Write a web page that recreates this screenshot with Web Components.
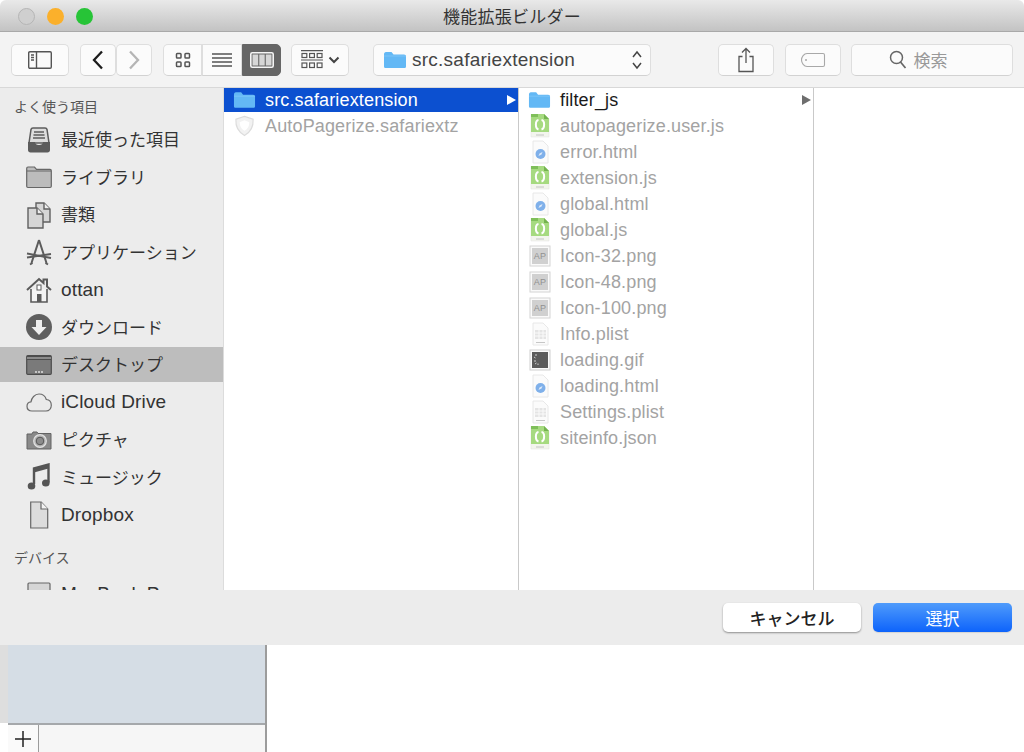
<!DOCTYPE html>
<html lang="ja">
<head>
<meta charset="utf-8">
<title>機能拡張ビルダー</title>
<style>
  html, body { margin: 0; height: 100%; background: #fff; overflow: hidden; }
  body { font-family: "Liberation Sans", "Noto Sans CJK JP", sans-serif; }
</style>
</head>
<body>
<file-dialog></file-dialog>

<script>
// all icons live here, drawn by hand against the screenshot
const folder = '<svg viewBox="0 0 24 18" width="24" height="18"><path d="M1 3.500C1 2 1.700 1 3 1h5.500l2 2.400H21c1.300 0 2 .8 2 2V15.500c0 1-.7 1.600-1.800 1.600H2.800C1.700 17.100 1 16.500 1 15.500z" fill="#63b8f5"/><path d="M1 4.500h22v1H1z" fill="#7cc4f7"/></svg>';
const jsDoc = '<svg viewBox="0 0 22 24" width="22" height="24"><path d="M2 0h13l5 5v18H2z" fill="#f3f5ee" stroke="#e2e2e2" stroke-width=".5"/><path d="M2 0h13l5 5v13H2z" fill="#a6da80"/><path d="M15 0l5 5h-5z" fill="#74b350"/><path d="M2 0h7v3H2z" fill="#7fbf5a"/><path d="M9.500 6c-3.500.5-3.500 8.500 0 9.500M12.500 6c3.500.5 3.500 8.500 0 9.500" fill="none" stroke="#fff" stroke-width="2"/><path d="M7 21h8" stroke="#c4c4c4"/></svg>';
const htmlDoc = '<svg viewBox="0 0 22 24" width="22" height="24"><path d="M4 1h10l5 5v17H4z" fill="#fbfbfb" stroke="#e8e8e8"/><circle cx="11.500" cy="14" r="5" fill="#7fb0ea"/><path d="M13.500 12l-3 1.500-1 2.500 3-1.500z" fill="#dfeaf8"/></svg>';
const pngDoc = '<svg viewBox="0 0 22 24" width="22" height="24"><rect x="1" y="2" width="20" height="20" fill="#fafafa" stroke="#d4d4d4"/><rect x="3" y="4" width="16" height="16" fill="#d0d0d0"/><text x="11" y="15" font-family="Liberation Sans" font-size="9" text-anchor="middle" fill="#909090">AP</text></svg>';
const plistDoc = '<svg viewBox="0 0 22 24" width="22" height="24"><path d="M4 1h10l5 5v17H4z" fill="#fbfbfb" stroke="#e8e8e8"/><path d="M6 8h11v9H6z" fill="#e4e4e4"/><path d="M6 11h11M6 14h11M10 8v9M14 8v9" stroke="#fafafa"/><path d="M7 20.500h9" stroke="#c6c6c6"/></svg>';
const gifDoc = '<svg viewBox="0 0 22 24" width="22" height="24"><rect x="1" y="2" width="20" height="20" fill="#fafafa" stroke="#cfcfcf"/><rect x="3" y="4" width="16" height="16" fill="#5b5b5b"/><path d="M7 6v2M5 9l1.500 1M5 13h2M6 16l1.500-1M9 17v-1.500" stroke="#ccc"/></svg>';
const shield = '<svg viewBox="0 0 24 24" width="24" height="24"><path d="M12 2l9 3c.5 8-2 13-9 17C5 18 2.500 13 3 5z" fill="#f2f2f2" stroke="#dcdcdc" stroke-width="1.200"/><path d="M12 6l5 2c0 4-1.500 7-5 9-3.500-2-5-5-5-9z" fill="#fff"/></svg>';

const ICONS = {
  folder, js: jsDoc, html: htmlDoc, png: pngDoc, plist: plistDoc, gif: gifDoc, shield,
  recent: '<svg viewBox="0 0 26 28" width="26" height="28"><path d="M3 17L5 3.500C5.200 2.500 6 2 7 2h12c1 0 1.800.5 2 1.500L23 17z" fill="#ddd" stroke="#5c5c5c" stroke-width="1.500"/><path d="M8 6h10M7.500 9h11M7 12h12" stroke="#5c5c5c" stroke-width="1.300"/><path d="M2 16h7c0 2 1.500 3 4 3s4-1 4-3h7v8c0 1.500-1 2.500-2.500 2.500h-17C3 26.500 2 25.500 2 24z" fill="#5c5c5c"/></svg>',
  library: '<svg viewBox="0 0 26 28" width="26" height="28"><path d="M.7 5.500C.7 4.500 1.200 4 2 4h6.500l2 2.400H24c.8 0 1.300.5 1.300 1.300v15.600c0 .8-.5 1.200-1.300 1.200H2c-.8 0-1.300-.4-1.300-1.200z" fill="#bcbcbc" stroke="#666" stroke-width="1.200"/><path d="M1 8h24" stroke="#666"/></svg>',
  docs: '<svg viewBox="0 0 26 28" width="26" height="28"><path d="M10 2h8l6 6v13H10z" fill="#d6d6d6" stroke="#606060" stroke-width="1.400"/><path d="M18 2v6h6" fill="#eee" stroke="#606060" stroke-width="1.400"/><path d="M2 7h9l6 6v14H2z" fill="#d6d6d6" stroke="#606060" stroke-width="1.400"/><path d="M11 7v6h6" fill="#eee" stroke="#606060" stroke-width="1.400"/></svg>',
  apps: '<svg viewBox="0 0 26 28" width="26" height="28"><path d="M13 2L5.500 25M13 2l7.500 23" fill="none" stroke="#5c5c5c" stroke-width="2"/><path d="M1 19.500L25 16M1 15.500l24 4.500" fill="none" stroke="#5c5c5c" stroke-width="1.800"/><path d="M4 26.500l2.500-1.500M22 26.500L19.500 25" stroke="#5c5c5c" stroke-width="2"/></svg>',
  home: '<svg viewBox="0 0 26 28" width="26" height="28"><path d="M1 14L13 3l4.500 4V3.500h3.500V10.500l4 3.500" fill="none" stroke="#5a5a5a" stroke-width="2"/><path d="M5 13v13h16V13" fill="#f3f3f3" stroke="#5a5a5a" stroke-width="1.600"/><rect x="11" y="9" width="4" height="5" fill="#fff" stroke="#5a5a5a"/><rect x="11" y="18" width="4.500" height="8" fill="#5a5a5a"/></svg>',
  download: '<svg viewBox="0 0 26 28" width="26" height="28"><circle cx="13" cy="14" r="13" fill="#5f5f5f"/><path d="M10 7h6v7h4.500L13 22l-7.500-8H10z" fill="#eee"/></svg>',
  desktop: '<svg viewBox="0 0 26 28" width="26" height="28"><rect x=".7" y="4.700" width="24.600" height="18.600" rx="1" fill="#7a7a7a" stroke="#4d4d4d" stroke-width="1.200"/><path d="M1 5h24v4H1z" fill="#4d4d4d"/><path d="M1 7h24" stroke="#ccc"/><path d="M9 20h2v2H9zM12 20h2v2h-2zM15 20h2v2h-2z" fill="#c5c5c5"/></svg>',
  cloud: '<svg viewBox="0 0 26 28" width="26" height="28"><path d="M6 23c-3 0-5-2-5-4.800C1 15.800 2.800 14 5 13.800 5.500 10 8.700 6 13 6c3.700 0 6.300 2.300 7.300 5.500 3 .3 5 2.700 5 5.800 0 3.200-2.200 5.700-5.300 5.700z" fill="#eaeaea" stroke="#6b6b6b" stroke-width="1.200"/></svg>',
  camera: '<svg viewBox="0 0 26 28" width="26" height="28"><path d="M1 8h5l1-2h4l1 1.500h13V23H1z" fill="#8a8a8a" stroke="#636363"/><circle cx="14" cy="15" r="6.300" fill="#b5b5b5" stroke="#e2e2e2" stroke-width="1.200"/><circle cx="14" cy="15" r="3.800" fill="#8c8c8c" stroke="#575757"/></svg>',
  music: '<svg viewBox="0 0 26 28" width="26" height="28"><path d="M8 21V5.500L22.500 1.500v18" fill="none" stroke="#555" stroke-width="2.400"/><path d="M8 5.500L22.500 1.500v4L8 9.500z" fill="#555"/><ellipse cx="5.500" cy="23" rx="3.800" ry="3.600" fill="#555"/><ellipse cx="19.800" cy="20" rx="3.800" ry="3.600" fill="#555"/></svg>',
  page: '<svg viewBox="0 0 26 28" width="26" height="28"><path d="M4.700 1h10.500l6.500 7v19h-17z" fill="#dcdcdc" stroke="#666" stroke-width="1.200"/><path d="M15 1v7h7" fill="#f2f2f2" stroke="#666" stroke-width="1.200"/></svg>',
  laptop: '<svg viewBox="0 0 26 28" width="26" height="28"><rect x="2" y="3" width="22" height="19" rx="1" fill="#d6d6d6" stroke="#666" stroke-width="1.200"/></svg>',
  sidebar: '<svg viewBox="0 0 24 18" width="24" height="18"><rect x=".7" y=".7" width="22.600" height="16.600" rx="1.200" fill="#fafafa" stroke="#555" stroke-width="1.400"/><path d="M8.500 1v16" stroke="#555" stroke-width="1.400"/><path d="M3 4h3M3 6.500h3M3 9h3" stroke="#555" stroke-width="1.300"/></svg>',
  back: '<svg viewBox="0 0 14 20" width="14" height="20"><path d="M11 1.500L3 10l8 8.500" fill="none" stroke="#1c1c1c" stroke-width="2.300"/></svg>',
  forward: '<svg viewBox="0 0 14 20" width="14" height="20"><path d="M3 1.500L11 10l-8 8.500" fill="none" stroke="#b5b5b5" stroke-width="2.300"/></svg>',
  grid: '<svg viewBox="0 0 16 16" width="16" height="16"><g fill="none" stroke="#555" stroke-width="1.500"><rect x="1.500" y="1.500" width="4.500" height="4.500" rx=".8"/><rect x="10" y="1.500" width="4.500" height="4.500" rx=".8"/><rect x="1.500" y="10" width="4.500" height="4.500" rx=".8"/><rect x="10" y="10" width="4.500" height="4.500" rx=".8"/></g></svg>',
  list: '<svg viewBox="0 0 22 16" width="22" height="16"><path d="M1 2h20M1 6h20M1 10h20M1 14h20" stroke="#555" stroke-width="1.300"/></svg>',
  columns: '<svg viewBox="0 0 24 16" width="24" height="16"><rect x=".8" y=".8" width="22.400" height="14.400" rx="1.500" fill="#666" stroke="#f5f5f5" stroke-width="1.600"/><path d="M2.500 2.500h5.700v11H2.500zM9.300 2.500h5.400v11H9.300zM15.800 2.500h5.700v11h-5.700z" fill="#d6d6d6"/></svg>',
  arrange: '<svg viewBox="0 0 22 20" width="22" height="20"><path d="M0 .7h22M0 10h22" stroke="#555" stroke-width="1.200"/><g fill="none" stroke="#555" stroke-width="1.200"><rect x="1" y="3.500" width="4.800" height="4"/><rect x="8.600" y="3.500" width="4.800" height="4"/><rect x="16.200" y="3.500" width="4.800" height="4"/><rect x="1" y="13" width="4.800" height="4.500"/><rect x="8.600" y="13" width="4.800" height="4.500"/><rect x="16.200" y="13" width="4.800" height="4.500"/></g></svg>',
  caret: '<svg viewBox="0 0 12 8" width="12" height="8"><path d="M1.500 1.500L6 6l4.500-4.500" fill="none" stroke="#444" stroke-width="2"/></svg>',
  updown: '<svg viewBox="0 0 12 22" width="12" height="22"><path d="M2 8l4-5 4 5M2 14l4 5 4-5" fill="none" stroke="#444" stroke-width="1.500"/></svg>',
  share: '<svg viewBox="0 0 18 26" width="18" height="26"><path d="M5.500 9.500H2v15h14v-15h-3.500" fill="none" stroke="#555" stroke-width="1.300"/><path d="M9 16V2M5 5.500L9 1.500l4 4" fill="none" stroke="#555" stroke-width="1.300"/></svg>',
  tag: '<svg viewBox="0 0 26 16" width="26" height="16"><path d="M7 1.500h16c1 0 1.500.5 1.500 1.500v10c0 1-.5 1.500-1.500 1.500H7C4 14.500 1.500 11 1.500 8S4 1.500 7 1.500z" fill="none" stroke="#a8a8a8" stroke-width="1.100"/><circle cx="6" cy="8" r="1" fill="#a8a8a8"/></svg>',
  search: '<svg viewBox="0 0 18 19" width="18" height="19"><circle cx="7.500" cy="7.500" r="6" fill="none" stroke="#666" stroke-width="1.500"/><path d="M11.500 12l5 6" stroke="#666" stroke-width="1.700"/></svg>',
  plus: '<svg viewBox="0 0 18 18" width="18" height="18"><path d="M9 1v16M1 9h16" stroke="#222" stroke-width="1.500"/></svg>'
};

class SfIcon extends HTMLElement {
  static get observedAttributes() { return ['name']; }
  constructor() {
    super();
    this.attachShadow({ mode: 'open' });
  }
  attributeChangedCallback() {
    this.shadowRoot.innerHTML = `<style>:host{display:inline-flex;align-items:center;justify-content:center;flex:none}svg{display:block}</style>${ICONS[this.getAttribute('name')] || ''}`;
  }
}
customElements.define('sf-icon', SfIcon);

class TitleBar extends HTMLElement {
  constructor() {
    super();
    this.attachShadow({ mode: 'open' }).innerHTML = `
      <style>
        :host { display: grid; grid-template-columns: 1fr auto 1fr; align-items: center; height: 32px; box-sizing: border-box;
          background: linear-gradient(#e9e9e9, #c3c3c3); border-bottom: 1px solid #a9a9a9; border-radius: 6px 6px 0 0; }
        .lights { display: flex; gap: 12px; margin-left: 18px; }
        .lights span { width: 17px; height: 17px; border-radius: 50%; box-sizing: border-box; }
        .close { background: #cfcfcf; border: 1px solid #b5b5b5; }
        .min { background: #fbb02b; }
        .max { background: #27c437; }
        .name { font: 17px/32px "Noto Sans CJK JP", sans-serif; letter-spacing: .25px; color: #333; }
      </style>
      <div class="lights"><span class="close"></span><span class="min"></span><span class="max"></span></div>
      <div class="name"><slot></slot></div>
      <div></div>`;
  }
}
customElements.define('title-bar', TitleBar);

class ToolButton extends HTMLElement {
  constructor() {
    super();
    this.attachShadow({ mode: 'open' }).innerHTML = `
      <style>
        :host { display: flex; align-items: center; justify-content: center; gap: 5px; box-sizing: border-box; height: 32px;
          background: #fbfbfb; border: 1px solid #dedede; border-bottom-color: #d2d2d2; border-radius: 5px; flex: none; }
        :host([active]) { background: #666; border-color: #666; }
      </style>
      <slot></slot>`;
  }
}
customElements.define('tool-button', ToolButton);

class ToolBar extends HTMLElement {
  constructor() {
    super();
    this.attachShadow({ mode: 'open' }).innerHTML = `
      <style>
        :host { display: flex; align-items: center; height: 56px; box-sizing: border-box; padding: 1px 11px 0 11px; background: #f3f3f3; border-bottom: 1px solid #d8d8d8; }
        .seg { display: flex; flex: none; }
        tool-button { width: var(--w); margin-left: var(--m, 0); }
        .path { justify-content: flex-start; padding: 0 7px 0 9px; gap: 5px; font: 19px "Liberation Sans", sans-serif; letter-spacing: .25px; color: #444; }
        .path span { flex: 1; }
        .find { font: 17px "Noto Sans CJK JP", sans-serif; color: #999; gap: 7px; padding: 0 28px 2px 0; }
        .l { border-radius: 5px 0 0 5px; } .r { border-radius: 0 5px 5px 0; } .c { border-radius: 0; }
      </style>
      <tool-button style="--w:58px"><sf-icon name="sidebar"></sf-icon></tool-button>
      <div class="seg" style="margin-left:11px">
        <tool-button style="--w:36px"><sf-icon name="back"></sf-icon></tool-button>
        <tool-button style="--w:36px"><sf-icon name="forward"></sf-icon></tool-button>
      </div>
      <div class="seg" style="margin-left:11px">
        <tool-button class="l" style="--w:39px"><sf-icon name="grid"></sf-icon></tool-button>
        <tool-button class="c" style="--w:40px"><sf-icon name="list"></sf-icon></tool-button>
        <tool-button class="r" active style="--w:39px"><sf-icon name="columns"></sf-icon></tool-button>
      </div>
      <tool-button style="--w:58px;--m:10px"><sf-icon name="arrange"></sf-icon><sf-icon name="caret"></sf-icon></tool-button>
      <tool-button class="path" style="--w:278px;--m:24px"><sf-icon name="folder"></sf-icon><span>src.safariextension</span><sf-icon name="updown"></sf-icon></tool-button>
      <tool-button style="--w:56px;--m:67px"><sf-icon name="share"></sf-icon></tool-button>
      <tool-button style="--w:56px;--m:11px"><sf-icon name="tag"></sf-icon></tool-button>
      <tool-button class="find" style="--w:162px;--m:10px"><sf-icon name="search"></sf-icon><span>検索</span></tool-button>`;
  }
}
customElements.define('tool-bar', ToolBar);

class SideItem extends HTMLElement {
  constructor() {
    super();
    this.attachShadow({ mode: 'open' }).innerHTML = `
      <style>
        :host { display: flex; align-items: center; gap: 9px; height: 35px; margin-bottom: 2.5px; padding-left: 26px; color: #333;
          font: 17px "Noto Sans CJK JP", sans-serif; white-space: nowrap; }
        :host([latin]) { font: 19px "Liberation Sans", sans-serif; letter-spacing: .15px; }
        :host([selected]) { background: #bdbdbd; }
        span { padding-bottom: 2px; }
        :host([latin]) span { padding-bottom: 0; }
      </style>
      <sf-icon></sf-icon><span><slot></slot></span>`;
  }
  connectedCallback() {
    this.shadowRoot.querySelector('sf-icon').setAttribute('name', this.getAttribute('icon'));
  }
}
customElements.define('side-item', SideItem);

class SideBar extends HTMLElement {
  constructor() {
    super();
    this.attachShadow({ mode: 'open' }).innerHTML = `
      <style>
        :host { display: block; width: 224px; flex: none; box-sizing: border-box; background: #ececec; border-right: 1px solid #dcdcdc; padding-top: 7px; overflow: hidden; }
        h2 { margin: 0; padding-left: 14px; font: 400 14px/22px "Noto Sans CJK JP", sans-serif; color: #555; }
        .items { margin: 5px 0 13.500px; }
        .devices { margin-top: 9px; }
      </style>
      <h2>よく使う項目</h2>
      <div class="items">
        <side-item icon="recent">最近使った項目</side-item>
        <side-item icon="library">ライブラリ</side-item>
        <side-item icon="docs">書類</side-item>
        <side-item icon="apps">アプリケーション</side-item>
        <side-item icon="home" latin>ottan</side-item>
        <side-item icon="download">ダウンロード</side-item>
        <side-item icon="desktop" selected>デスクトップ</side-item>
        <side-item icon="cloud" latin>iCloud Drive</side-item>
        <side-item icon="camera">ピクチャ</side-item>
        <side-item icon="music">ミュージック</side-item>
        <side-item icon="page" latin>Dropbox</side-item>
      </div>
      <h2>デバイス</h2>
      <div class="devices"><side-item icon="laptop" latin>MacBook Pro</side-item></div>`;
  }
}
customElements.define('side-bar', SideBar);

class FileRow extends HTMLElement {
  constructor() {
    super();
    this.attachShadow({ mode: 'open' }).innerHTML = `
      <style>
        :host { display: flex; align-items: center; gap: 9px; height: 24px; margin-bottom: 2px; padding: 0 2px 0 9px; color: #a3a3a3;
          font: 18px "Liberation Sans", sans-serif; letter-spacing: .15px; white-space: nowrap; }
        :host([enabled]) { color: #1a1a1a; }
        :host([selected]) { background: #0c50d0; color: #fff; }
        sf-icon { width: 23px; }
        span { flex: 1; }
        i { width: 0; height: 0; border: 5.500px solid transparent; border-left: 9px solid #6e6e6e; border-right: 0; }
        :host([selected]) i { border-left-color: #fff; }
      </style>
      <sf-icon></sf-icon><span><slot></slot></span><i hidden></i>`;
  }
  connectedCallback() {
    const root = this.shadowRoot;
    root.querySelector('sf-icon').setAttribute('name', this.getAttribute('icon'));
    if (this.hasAttribute('arrow')) root.querySelector('i').hidden = false;
  }
}
customElements.define('file-row', FileRow);

class FileColumn extends HTMLElement {
  constructor() {
    super();
    this.attachShadow({ mode: 'open' }).innerHTML = `
      <style>
        :host { display: block; box-sizing: border-box; background: #fff; border-right: 1px solid #c9c9c9; width: var(--w, 295px); flex: none; }
        :host(:last-child) { flex: 1; border-right: 0; }
      </style>
      <slot></slot>`;
  }
}
customElements.define('file-column', FileColumn);

class PushButton extends HTMLElement {
  constructor() {
    super();
    this.attachShadow({ mode: 'open' }).innerHTML = `
      <style>
        :host { display: flex; align-items: center; justify-content: center; width: 138px; height: 29px; box-sizing: border-box; border-radius: 5px;
          background: #fff; color: #222; font: 500 17px "Noto Sans CJK JP", sans-serif; box-shadow: 0 1px 2px rgba(0,0,0,.4); }
        :host([primary]) { width: 139px; background: linear-gradient(#4f9bfb, #0d63fb); color: #fff; font-weight: 400; box-shadow: 0 1px 1px rgba(0,0,0,.1); }
      </style>
      <slot></slot>`;
  }
}
customElements.define('push-button', PushButton);

class DialogFooter extends HTMLElement {
  constructor() {
    super();
    this.attachShadow({ mode: 'open' }).innerHTML = `
      <style>
        :host { display: flex; justify-content: flex-end; align-items: center; gap: 12px; height: 55px; box-sizing: border-box; padding: 0 12px 1px; background: #ececec; }
      </style>
      <slot></slot>`;
  }
}
customElements.define('dialog-footer', DialogFooter);

class BehindWindow extends HTMLElement {
  constructor() {
    super();
    this.attachShadow({ mode: 'open' }).innerHTML = `
      <style>
        :host { display: flex; height: 107px; background: #fff; }
        .edge { width: 8px; height: 78px; background: #dedede; flex: none; }
        .pane { width: 259px; flex: none; box-sizing: border-box; border-right: 2px solid #9c9c9c; display: flex; flex-direction: column; }
        .list { height: 78px; flex: none; background: #d5dde5; border-bottom: 2px solid #a5a8ab; }
        .tools { flex: 1; display: flex; background: #f6f6f6; }
        .plus { width: 31px; box-sizing: border-box; border-right: 1px solid #9c9c9c; background: #fafafa; display: flex; align-items: center; justify-content: center; }
      </style>
      <div class="edge"></div>
      <div class="pane">
        <div class="list"></div>
        <div class="tools"><div class="plus"><sf-icon name="plus"></sf-icon></div></div>
      </div>`;
  }
}
customElements.define('behind-window', BehindWindow);

class FileDialog extends HTMLElement {
  constructor() {
    super();
    const files = [
      ['js', 'autopagerize.user.js'], ['html', 'error.html'], ['js', 'extension.js'], ['html', 'global.html'],
      ['js', 'global.js'], ['png', 'Icon-32.png'], ['png', 'Icon-48.png'], ['png', 'Icon-100.png'],
      ['plist', 'Info.plist'], ['gif', 'loading.gif'], ['html', 'loading.html'], ['plist', 'Settings.plist'], ['js', 'siteinfo.json']
    ];
    const rows = files.map(([icon, name]) => `<file-row icon="${icon}">${name}</file-row>`).join('');
    this.attachShadow({ mode: 'open' }).innerHTML = `
      <style>
        :host { display: flex; flex-direction: column; height: 752px; }
        main { display: flex; height: 502px; flex: none; overflow: hidden; background: #fff; }
      </style>
      <title-bar>機能拡張ビルダー</title-bar>
      <tool-bar></tool-bar>
      <main>
        <side-bar></side-bar>
        <file-column>
          <file-row icon="folder" enabled selected arrow>src.safariextension</file-row>
          <file-row icon="shield">AutoPagerize.safariextz</file-row>
        </file-column>
        <file-column>
          <file-row icon="folder" enabled arrow>filter_js</file-row>
          ${rows}
        </file-column>
        <file-column></file-column>
      </main>
      <dialog-footer>
        <push-button>キャンセル</push-button>
        <push-button primary>選択</push-button>
      </dialog-footer>
      <behind-window></behind-window>`;
  }
}
customElements.define('file-dialog', FileDialog);
</script>
</body>
</html>
